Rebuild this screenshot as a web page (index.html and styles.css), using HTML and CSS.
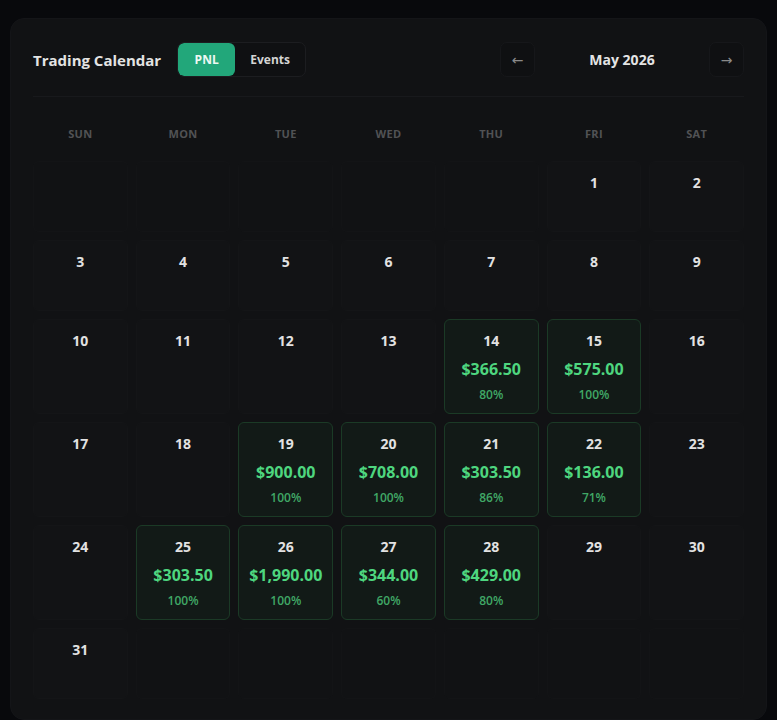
FILE: index.html
```html
<!DOCTYPE html>
<html lang="en">
<head>
<meta charset="utf-8">
<title>Trading Calendar</title>
<link rel="stylesheet" href="styles.css">
</head>
<body>
<div class="card">
  <div class="header">
    <div class="left">
      <h1 class="title">Trading Calendar</h1>
      <div class="toggle">
        <button class="tab active">PNL</button>
        <button class="tab">Events</button>
      </div>
    </div>
    <div class="nav">
      <button class="navbtn">&larr;</button>
      <div class="month">May 2026</div>
      <button class="navbtn">&rarr;</button>
    </div>
  </div>
  <div class="weekdays">
    <div>SUN</div><div>MON</div><div>TUE</div><div>WED</div><div>THU</div><div>FRI</div><div>SAT</div>
  </div>
  <div class="grid">
    <div class="cell blank"></div>
    <div class="cell blank"></div>
    <div class="cell blank"></div>
    <div class="cell blank"></div>
    <div class="cell blank"></div>
    <div class="cell"><div class="num">1</div></div>
    <div class="cell"><div class="num">2</div></div>

    <div class="cell"><div class="num">3</div></div>
    <div class="cell"><div class="num">4</div></div>
    <div class="cell"><div class="num">5</div></div>
    <div class="cell"><div class="num">6</div></div>
    <div class="cell"><div class="num">7</div></div>
    <div class="cell"><div class="num">8</div></div>
    <div class="cell"><div class="num">9</div></div>

    <div class="cell"><div class="num">10</div></div>
    <div class="cell"><div class="num">11</div></div>
    <div class="cell"><div class="num">12</div></div>
    <div class="cell"><div class="num">13</div></div>
    <div class="cell win"><div class="num">14</div><div class="amt">$366.50</div><div class="pct">80%</div></div>
    <div class="cell win"><div class="num">15</div><div class="amt">$575.00</div><div class="pct">100%</div></div>
    <div class="cell"><div class="num">16</div></div>

    <div class="cell"><div class="num">17</div></div>
    <div class="cell"><div class="num">18</div></div>
    <div class="cell win"><div class="num">19</div><div class="amt">$900.00</div><div class="pct">100%</div></div>
    <div class="cell win"><div class="num">20</div><div class="amt">$708.00</div><div class="pct">100%</div></div>
    <div class="cell win"><div class="num">21</div><div class="amt">$303.50</div><div class="pct">86%</div></div>
    <div class="cell win"><div class="num">22</div><div class="amt">$136.00</div><div class="pct">71%</div></div>
    <div class="cell"><div class="num">23</div></div>

    <div class="cell"><div class="num">24</div></div>
    <div class="cell win"><div class="num">25</div><div class="amt">$303.50</div><div class="pct">100%</div></div>
    <div class="cell win"><div class="num">26</div><div class="amt">$1,990.00</div><div class="pct">100%</div></div>
    <div class="cell win"><div class="num">27</div><div class="amt">$344.00</div><div class="pct">60%</div></div>
    <div class="cell win"><div class="num">28</div><div class="amt">$429.00</div><div class="pct">80%</div></div>
    <div class="cell"><div class="num">29</div></div>
    <div class="cell"><div class="num">30</div></div>

    <div class="cell"><div class="num">31</div></div>
    <div class="cell blank"></div>
    <div class="cell blank"></div>
    <div class="cell blank"></div>
    <div class="cell blank"></div>
    <div class="cell blank"></div>
    <div class="cell blank"></div>
  </div>
</div>
</body>
</html>
```
FILE: styles.css
```css
* { box-sizing: border-box; }
html, body { background: #08090c; }
body {
  margin: 0;
  padding: 18px 10px 0;
  font-family: "Open Sans", "Noto Sans", "Liberation Sans", sans-serif;
  color: #e4e4e4;
}
.card {
  background: #111214;
  border: 1px solid #141518;
  border-radius: 14px;
  padding: 23px 22px 20px;
}
.header {
  display: flex;
  justify-content: space-between;
  align-items: center;
  padding-bottom: 19px;
  border-bottom: 1px solid #18191c;
}
.left { display: flex; align-items: center; gap: 16px; }
.title {
  margin: 0;
  font-size: 15px;
  font-weight: 700;
  color: #e3e3e3;
}
.toggle {
  display: flex;
  height: 35px;
  border: 1px solid #1c1d20;
  border-radius: 7px;
  background: #0f1012;
  overflow: hidden;
}
.tab {
  border: 0;
  background: transparent;
  font-family: inherit;
  font-size: 12px;
  font-weight: 700;
  color: #d4d4d4;
  width: 70px;
  padding: 0;
  cursor: pointer;
}
.tab.active {
  background: #22a77a;
  color: #eef8f3;
  border-radius: 6px;
  width: 57px;
}
.nav { display: flex; align-items: center; }
.navbtn {
  width: 35px;
  height: 35px;
  border: 1px solid #16171a;
  border-radius: 7px;
  background: #0f1012;
  color: #8a8a8a;
  font-size: 14px;
  font-family: "DejaVu Sans", sans-serif;
  padding: 0;
}
.month {
  width: 174px;
  text-align: center;
  font-size: 14px;
  font-weight: 700;
  color: #e4e4e4;
}
.weekdays {
  display: grid;
  grid-template-columns: repeat(7, 1fr);
  gap: 8px;
  margin-top: 28px;
  margin-bottom: 18px;
  text-align: center;
  font-size: 11px;
  line-height: 18px;
  font-weight: 700;
  color: #515255;
  letter-spacing: 0.3px;
}
.grid {
  display: grid;
  grid-template-columns: repeat(7, 1fr);
  gap: 8px;
}
.cell {
  min-height: 71px;
  padding: 11px 4px 10px;
  border-radius: 6px;
  background: #121315;
  border: 1px solid #141517;
  display: flex;
  flex-direction: column;
  align-items: center;
}
.cell.blank { background: #111214; border-color: #131416; }
.num {
  font-size: 14px;
  line-height: 20px;
  font-weight: 700;
  color: #e2e2e2;
}
.cell.win {
  background: #121a17;
  border-color: #1b3a26;
}
.amt {
  margin-top: 7px;
  font-size: 16px;
  line-height: 22px;
  font-weight: 700;
  color: #4ed67f;
}
.pct {
  margin-top: 7px;
  font-size: 12px;
  line-height: 16px;
  font-weight: 600;
  color: #40a866;
}
```
